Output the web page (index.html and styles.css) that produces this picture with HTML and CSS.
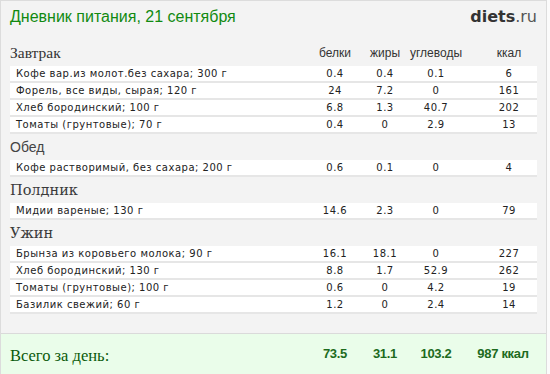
FILE: index.html
```html
<!DOCTYPE html>
<html lang="ru">
<head>
<meta charset="utf-8">
<link rel="stylesheet" href="styles.css">
</head>
<body>
<div class="diary">
  <header class="top">
    <h1 class="title">Дневник питания, 21 сентября</h1>
    <div class="logo"><span class="logo-main">diets</span><span class="logo-tld">.ru</span></div>
  </header>

  <section class="meal">
    <div class="meal-head">
      <h2 class="meal-name serif">Завтрак</h2>
      <span class="col">белки</span><span class="col">жиры</span><span class="col">углеводы</span><span class="col kcal">ккал</span>
    </div>
    <div class="row"><span class="name">Кофе вар.из молот.без сахара; 300 г</span><span class="num">0.4</span><span class="num">0.4</span><span class="num">0.1</span><span class="num kcal">6</span></div>
    <div class="row"><span class="name">Форель, все виды, сырая; 120 г</span><span class="num">24</span><span class="num">7.2</span><span class="num">0</span><span class="num kcal">161</span></div>
    <div class="row"><span class="name">Хлеб бородинский; 100 г</span><span class="num">6.8</span><span class="num">1.3</span><span class="num">40.7</span><span class="num kcal">202</span></div>
    <div class="row"><span class="name">Томаты (грунтовые); 70 г</span><span class="num">0.4</span><span class="num">0</span><span class="num">2.9</span><span class="num kcal">13</span></div>
  </section>

  <section class="meal">
    <div class="meal-head">
      <h2 class="meal-name sans">Обед</h2>
    </div>
    <div class="row"><span class="name">Кофе растворимый, без сахара; 200 г</span><span class="num">0.6</span><span class="num">0.1</span><span class="num">0</span><span class="num kcal">4</span></div>
  </section>

  <section class="meal">
    <div class="meal-head">
      <h2 class="meal-name wide-serif">Полдник</h2>
    </div>
    <div class="row"><span class="name">Мидии вареные; 130 г</span><span class="num">14.6</span><span class="num">2.3</span><span class="num">0</span><span class="num kcal">79</span></div>
  </section>

  <section class="meal">
    <div class="meal-head">
      <h2 class="meal-name wide-serif">Ужин</h2>
    </div>
    <div class="row"><span class="name">Брынза из коровьего молока; 90 г</span><span class="num">16.1</span><span class="num">18.1</span><span class="num">0</span><span class="num kcal">227</span></div>
    <div class="row"><span class="name">Хлеб бородинский; 130 г</span><span class="num">8.8</span><span class="num">1.7</span><span class="num">52.9</span><span class="num kcal">262</span></div>
    <div class="row"><span class="name">Томаты (грунтовые); 100 г</span><span class="num">0.6</span><span class="num">0</span><span class="num">4.2</span><span class="num kcal">19</span></div>
    <div class="row"><span class="name">Базилик свежий; 60 г</span><span class="num">1.2</span><span class="num">0</span><span class="num">2.4</span><span class="num kcal">14</span></div>
  </section>

  <footer class="total">
    <span class="total-label">Всего за день:</span>
    <span class="total-num">73.5</span><span class="total-num">31.1</span><span class="total-num">103.2</span><span class="total-num total-kcal">987 ккал</span>
  </footer>
</div>
</body>
</html>
```

FILE: styles.css
```css
html, body {
  margin: 0;
  padding: 0;
  background: #fbfbfb;
}

.diary {
  box-sizing: border-box;
  width: 547px;
  height: 374px;
  border: 1px solid #dcdcdc;
  border-bottom: none;
  background: #f3f3f3;
  display: flex;
  flex-direction: column;
}

.top {
  height: 39px;
  flex: none;
  display: flex;
  justify-content: space-between;
  align-items: flex-start;
  padding: 0 9px 0 9px;
}

.title {
  margin: 6px 0 0 0;
  font: 400 16px/20px "Liberation Sans", Arial, sans-serif;
  color: #118a11;
}

.logo {
  margin-top: 6px;
  font: 16px/20px "DejaVu Sans", sans-serif;
  color: #444;
}

.logo-main {
  font-weight: 700;
  color: #333;
}

.logo-tld {
  font-weight: 400;
  color: #555;
}

.meal {
  padding: 0 9px;
}

.meal-head,
.row,
.total {
  display: grid;
  grid-template-columns: 1fr 50px 50px 52px 72px;
}

.meal-head {
  height: 26px;
  align-items: end;
  padding: 0 3px 0 0;
  box-sizing: border-box;
}

.meal-name {
  margin: 0;
  font-weight: 400;
  color: #333;
  grid-column: 1;
  padding-bottom: 3px;
}

.serif {
  font: 400 15.5px/20px "Liberation Serif", "Times New Roman", serif;
}

.wide-serif {
  font: 400 14.5px/20px "DejaVu Serif", Georgia, serif;
  color: #3a3a3a;
}

.sans {
  font: 400 14px/20px "Liberation Sans", Arial, sans-serif;
  color: #444;
}

.col {
  font: 12px/14px "Liberation Sans", Arial, sans-serif;
  color: #333;
  text-align: center;
  padding-bottom: 6px;
}

.kcal {
  padding-left: 22px;
}

.row {
  height: 15px;
  background: #fff;
  border-bottom: 2px solid #e6e6e6;
  padding: 0 3px 0 6px;
  align-items: center;
  font: 10px/15px "DejaVu Sans", Verdana, sans-serif;
  letter-spacing: 0.5px;
  color: #222;
}

.num {
  text-align: center;
}

.total {
  margin-top: auto;
  height: 40px;
  border-top: 1px solid #dadada;
  background: #eafdea;
  padding: 0 12px 0 9px;
  align-items: center;
}

.total-label {
  font: 400 16.5px/20px "Liberation Serif", "Times New Roman", serif;
  color: #0b5a0b;
  padding-top: 4px;
  white-space: nowrap;
}

.total-num {
  font: 700 13px/20px "Liberation Sans", Arial, sans-serif;
  color: #1d6b1d;
  text-align: center;
  letter-spacing: -0.3px;
  white-space: nowrap;
}

.total-kcal {
  padding-left: 10px;
}
```
